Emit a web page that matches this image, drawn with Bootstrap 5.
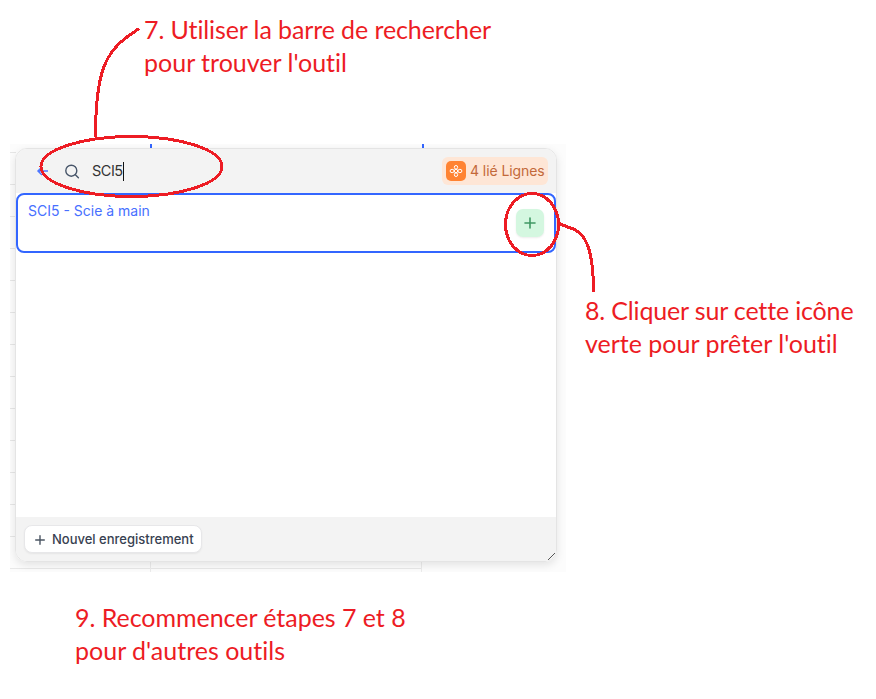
<!DOCTYPE html>
<html lang="fr">
<head>
<meta charset="utf-8">
<meta name="viewport" content="width=device-width, initial-scale=1">
<title>Prêter un outil</title>
<link href="https://cdn.jsdelivr.net/npm/bootstrap@5.3.0/dist/css/bootstrap.min.css" rel="stylesheet">
<style>
body{width:876px;height:699px;background:#fff;font-family:Inter,"Liberation Sans",sans-serif}
.guide-note{font-family:Lato,"Open Sans",sans-serif;font-size:25px;line-height:33px;color:#ed1c24;white-space:nowrap;font-variant-ligatures:none}
.guide-note span{display:block}
.guide-note span:first-child{letter-spacing:-.1px}
.note-search{height:144px;padding:13px 0 0 144px}
.note-add{padding:150px 0 0 19px}
.note-add span:first-child{letter-spacing:-.16px}
.note-again{padding:29px 0 0 75px}
.note-again span:first-child{letter-spacing:-.04px}
.sheet{width:556px;height:428px;margin-left:10px;padding:4px 9px 10px 5px;overflow:hidden;
 background:
 linear-gradient(#36f,#36f) 140px 0/2px 4px no-repeat,
 linear-gradient(#36f,#36f) 412px 0/2px 4px no-repeat,
 linear-gradient(#ebebeb,#ebebeb) 140px 100%/1px 10px no-repeat,
 linear-gradient(#ebebeb,#ebebeb) 411px 100%/1px 10px no-repeat,
 linear-gradient(#e8e8e8,#e8e8e8) 0 424px/412px 1px no-repeat,
 repeating-linear-gradient(#0000 0 8px,#e6e6e6 8px 9px,#0000 9px 32px) 0 0/6px 428px no-repeat,
 #fcfcfc}
.panel{width:542px;height:414px;border:1px solid #e4e4e4;border-radius:12px;overflow:hidden;background:#fff}
.panel-wrap{border-radius:12px;box-shadow:0 3px 8px rgba(0,0,0,.1)}
.bar{background:#f3f3f3}
.bar-top{height:44px;padding:0 8px 0 20px}
.query{font-size:14.5px;color:#333;letter-spacing:-.5px;margin-left:12px}
.caret{width:1px;height:19px;background:#111}
.linked{height:28px;width:106px;padding-left:4px;border-radius:6px;background:#fee6d6;color:#c3693a;font-size:14px;letter-spacing:-.08px;white-space:nowrap}
.linked-icon{width:20px;height:20px;border-radius:5px;background:#ff8332}
.linked-label{padding-bottom:1px}
.record{height:60px;border:2px solid #36f;border-radius:8px;padding:6px 10px 0 10px;color:#4770ff;font-size:14px;line-height:20px}
.add{width:28px;height:28px;border-radius:7px;background:#d4f7e0;margin-top:8px;box-shadow:0 1px 2px rgba(0,0,0,.08)}
.bar-bottom{height:44px;padding:0 0 0 8px}
.new-record{width:178px;height:28px;border:1px solid #e7e7e9;border-radius:8px;background:#fff;color:#374151;font-size:13px;font-weight:500;padding:1px 0 0 10px;box-shadow:0 1px 2px rgba(0,0,0,.06);white-space:nowrap}
.new-record svg{margin-right:7px}
.grip{margin-right:1px;margin-bottom:1px}
.strokes{left:0;top:0;pointer-events:none}
</style>
<script src="https://cdn.jsdelivr.net/npm/bootstrap@5.3.0/dist/js/bootstrap.bundle.min.js"></script>
</head>
<body class="position-relative overflow-hidden m-0">
<div class="guide-note note-search"><span>7. Utiliser la barre de rechercher</span><span>pour trouver l'outil</span></div>
<main class="d-flex">
  <div class="sheet flex-shrink-0">
    <div class="panel-wrap">
    <section class="panel d-flex flex-column">
      <header class="bar bar-top d-flex align-items-center">
        <svg width="13" height="12" viewBox="0 0 13 12" fill="none" stroke="#4f78ff" stroke-width="1.5"><path d="M12 6H2M6 2L2 6l4 4"/></svg>
        <svg class="ms-3" width="15" height="15" viewBox="0 0 15 15" fill="none" stroke="#475569" stroke-width="1.4" stroke-linecap="round"><circle cx="6.3" cy="6.7" r="5.5"/><path d="M10.4 10.7l3 3.1"/></svg>
        <span class="query">SCI5</span><span class="caret"></span>
        <div class="linked d-flex align-items-center ms-auto">
          <span class="linked-icon d-flex align-items-center justify-content-center me-1">
            <svg width="14" height="14" viewBox="0 0 14 14" fill="none" stroke="#fff" stroke-width="1"><circle cx="7" cy="7" r="1.7"/><ellipse cx="7" cy="3.3" rx="1.7" ry="1.8"/><ellipse cx="7" cy="10.7" rx="1.7" ry="1.8"/><ellipse cx="3.1" cy="7" rx="2" ry="1.7"/><ellipse cx="10.9" cy="7" rx="2" ry="1.7"/></svg>
          </span><span class="linked-label">4 lié Lignes</span>
        </div>
      </header>
      <div class="record d-flex justify-content-between align-items-start">
        <span class="record-label">SCI5 - Scie à main</span>
        <button class="add btn border-0 p-0 d-flex align-items-center justify-content-center" aria-label="Ajouter"><svg width="12" height="12" viewBox="0 0 12 12" stroke="#3f9863" stroke-width="1.6" stroke-linecap="round"><path d="M1 6h10M6 1v10"/></svg></button>
      </div>
      <footer class="bar bar-bottom d-flex align-items-center justify-content-between mt-auto">
        <button class="new-record d-flex align-items-center"><svg class="flex-shrink-0" width="10" height="10" viewBox="0 0 10 10" stroke="#4b5563" stroke-width="1.4" stroke-linecap="round"><path d="M.7 5h8.6M5 .7v8.6"/></svg><span class="new-label">Nouvel enregistrement</span></button>
        <svg class="grip align-self-end" width="7" height="7" viewBox="0 0 7 7" stroke="#555" stroke-width="1" shape-rendering="crispEdges"><path d="M0 6.500h1M1 5.500h1M2 4.500h1M3 3.500h1M4 2.500h1M5 1.500h1M6 .5h1M4 6.500h1M5 5.500h1M6 4.500h1"/></svg>
      </footer>
    </section>
    </div>
  </div>
  <div class="guide-note note-add"><span>8. Cliquer sur cette icône</span><span>verte pour prêter l'outil</span></div>
</main>
<div class="guide-note note-again"><span>9. Recommencer étapes 7 et 8</span><span>pour d'autres outils</span></div>
<svg class="strokes position-absolute" width="876" height="699" viewBox="0 0 876 699" fill="none" stroke="#ed1c24" stroke-width="3" shape-rendering="crispEdges">
  <path d="M139 28.5L127 37C106 52 95.5 72 95.5 137"/>
  <ellipse cx="131.5" cy="166.5" rx="90.5" ry="30"/>
  <ellipse cx="532" cy="224.5" rx="26.5" ry="31"/>
  <path d="M559 223.5L569 227.500C588 232 593.500 255 593.500 292"/>
</svg>
</body>
</html>
